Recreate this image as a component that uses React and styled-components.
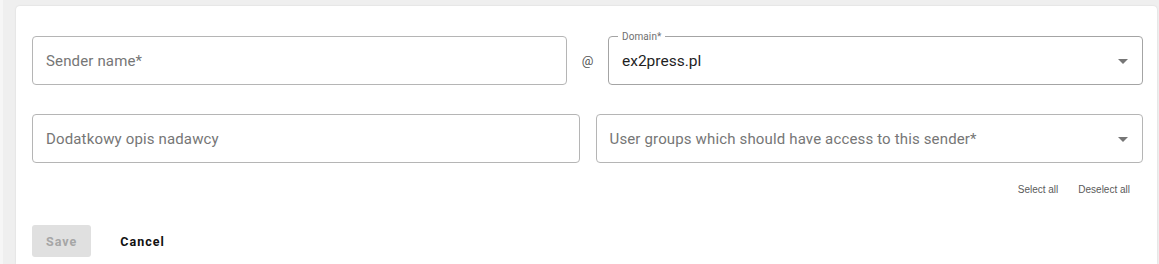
import React from "react";
import styled, { createGlobalStyle } from "styled-components";

const Global = createGlobalStyle`
  html, body { margin: 0; padding: 0; background: #efefef; }
  body { font-family: Roboto, "Liberation Sans", sans-serif; }
  * { box-sizing: border-box; }
`;

const Page = styled.div`
  height: 264px;
  padding: 6px 2px 0 13px;
  background: #efefef;
  border-left: 3px solid #f6f6f6;
  overflow: hidden;
`;

const Card = styled.div`
  background: #fff;
  border-radius: 4px 4px 0 0;
  height: 258px;
  padding: 30px 14px 0 16px;
  box-shadow: 0 0 2px rgba(0, 0, 0, 0.12);
`;

const Row = styled.div`
  display: flex;
  align-items: center;
  gap: ${(p) => p.$gap ?? 16}px;
  margin-bottom: ${(p) => p.$mb ?? 0}px;
`;

const Field = styled.div`
  position: relative;
  flex: ${(p) => (p.$w ? `0 0 ${p.$w}px` : "1 1 0")};
  min-width: 0;
  height: 49px;
  border: 1px solid ${(p) => (p.$dark ? "#a4a4a4" : "#b5b5b5")};
  border-radius: 4px;
  display: flex;
  align-items: center;
  padding: 0 13px;
`;

const Placeholder = styled.span`
  font-size: 15px;
  color: #767676;
  letter-spacing: 0.15px;
  white-space: nowrap;
`;

const Value = styled.span`
  font-size: 15.5px;
  color: #1f1f1f;
`;

const Legend = styled.span`
  position: absolute;
  top: -6px;
  left: 9px;
  padding: 0 4px;
  background: #fff;
  font-size: 10px;
  color: #6f6f6f;
  line-height: 11px;
  letter-spacing: 0.1px;
`;

const Arrow = styled.span`
  position: absolute;
  right: 14px;
  top: 50%;
  margin-top: -2px;
  width: 0;
  height: 0;
  border-left: 5px solid transparent;
  border-right: 5px solid transparent;
  border-top: 5px solid #767676;
`;

const At = styled.span`
  flex: 0 0 41px;
  text-align: center;
  font-size: 13px;
  color: #555;
`;

const LinkRow = styled.div`
  display: flex;
  justify-content: flex-end;
  gap: 20px;
  padding: 21px 13px 0 0;
  height: 60px;
`;

const SmallLink = styled.span`
  font-family: "Liberation Sans", Arial, sans-serif;
  font-size: 10px;
  color: #5a5a5a;
`;

const Actions = styled.div`
  display: flex;
  align-items: center;
  gap: 29px;
  margin-top: 2px;
`;

const Button = styled.button`
  font-family: Roboto, "Liberation Sans", sans-serif;
  border: none;
  border-radius: 3px;
  height: 32px;
  padding: ${(p) => (p.$text ? "0" : "0 14px")};
  min-width: ${(p) => (p.$text ? "0" : "59px")};
  font-size: 12.5px;
  font-weight: 700;
  letter-spacing: 1px;
  background: ${(p) => (p.$disabled ? "#e0e0e0" : "transparent")};
  color: ${(p) => (p.$disabled ? "#a6a6a6" : "#111")};
  cursor: pointer;
`;

export default function App() {
  return (
    <>
      <Global />
      <Page>
        <Card>
          <Row $gap={0} $mb={29}>
            <Field $w={535}>
              <Placeholder>Sender name*</Placeholder>
            </Field>
            <At>@</At>
            <Field $dark>
              <Legend>Domain*</Legend>
              <Value>ex2press.pl</Value>
              <Arrow />
            </Field>
          </Row>
          <Row>
            <Field>
              <Placeholder>Dodatkowy opis nadawcy</Placeholder>
            </Field>
            <Field>
              <Placeholder>User groups which should have access to this sender*</Placeholder>
              <Arrow />
            </Field>
          </Row>
          <LinkRow>
            <SmallLink>Select all</SmallLink>
            <SmallLink>Deselect all</SmallLink>
          </LinkRow>
          <Actions>
            <Button $disabled>Save</Button>
            <Button $text>Cancel</Button>
          </Actions>
        </Card>
      </Page>
    </>
  );
}
